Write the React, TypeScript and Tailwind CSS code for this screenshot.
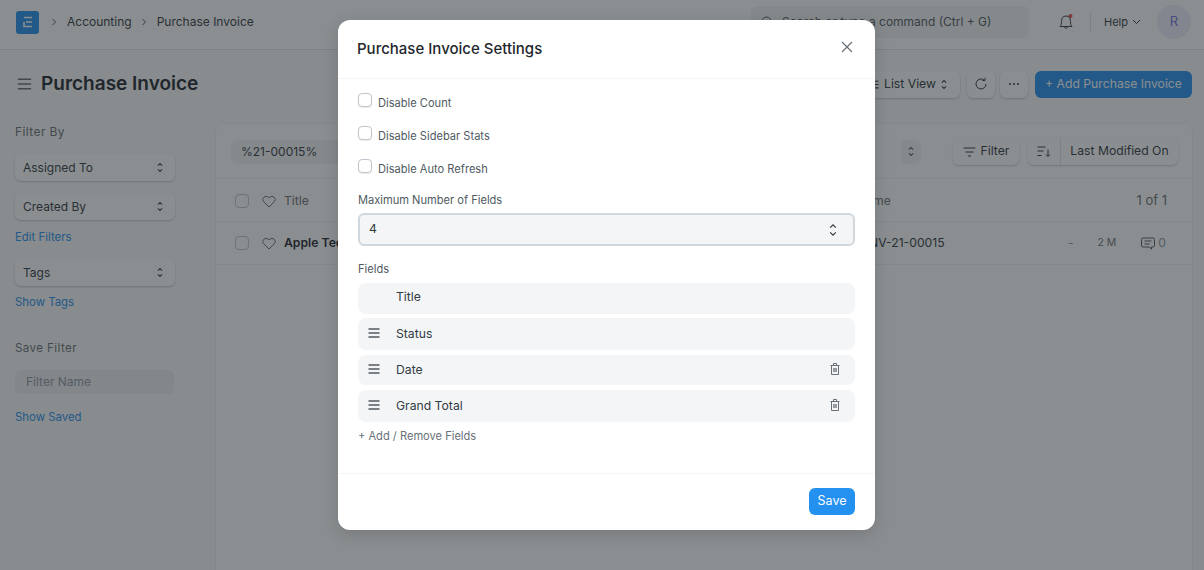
import { ReactNode } from "react";

function UpDown({ className = "" }: { className?: string }) {
    return (
        <svg viewBox="0 0 8 14" fill="none" stroke="currentColor" strokeWidth="1.2" className={`h-[14px] w-[8px] ${className}`}>
            <path d="M1.2 4.600 4 1.800l2.800 2.800M1.200 9.400 4 12.200l2.800-2.800" />
        </svg>
    );
}

function SmallUpDown() {
    return (
        <svg viewBox="0 0 8 14" fill="none" stroke="currentColor" strokeWidth="1.400" className="h-[11px] w-[6px] shrink-0">
            <path d="M1.200 4.600 4 1.800l2.800 2.800M1.200 9.400 4 12.200l2.800-2.800" />
        </svg>
    );
}

function Chevron({ className = "" }: { className?: string }) {
    return (
        <svg width="6" height="8" viewBox="0 0 6 8" fill="none" stroke="currentColor" strokeWidth="1" className={className}>
            <path d="M1.500 1 4.500 4l-3 3" />
        </svg>
    );
}

function Burger({ className = "" }: { className?: string }) {
    return (
        <svg viewBox="0 0 12 10" fill="none" stroke="currentColor" strokeWidth="1.300" className={`shrink-0 ${className}`}>
            <path d="M.5 1h11M.5 5h11M.5 9h11" />
        </svg>
    );
}

function Heart() {
    return (
        <svg width="14" height="13" viewBox="0 0 14 13" fill="none" stroke="#687178" strokeWidth="1" className="shrink-0">
            <path d="M7 12 1.800 6.800a3.100 3.100 0 0 1 0-4.500 3.200 3.200 0 0 1 4.500 0L7 3l.7-.7a3.200 3.200 0 0 1 4.500 0 3.100 3.100 0 0 1 0 4.500L7 12Z" />
        </svg>
    );
}

function Trash() {
    return (
        <svg width="10" height="12" viewBox="0 0 10 12" fill="none" stroke="#687178" strokeWidth="1" className="mb-[2px] shrink-0">
            <path d="M.5 2.500h9M3.500 2.500v-2h3v2M1.500 2.500v9h7v-9M3.800 5v4M6.200 5v4M5 5v4" />
        </svg>
    );
}

function SideSelect({ label, className = "" }: { label: string; className?: string }) {
    return (
        <div className={`flex h-[27px] w-[160px] items-center justify-between rounded-md bg-white pl-2 pr-[12px] text-[12px] text-[#313b44] shadow-[0_1px_2px_rgba(0,0,0,0.2)] ${className}`}>
            {label}
            <SmallUpDown />
        </div>
    );
}

function ToolBtn({ children, className = "" }: { children: ReactNode; className?: string }) {
    return (
        <div className={`flex h-[27px] items-center justify-center rounded-md bg-white text-[12.2px] text-[#313b44] shadow-[0_1px_2px_rgba(0,0,0,0.2)] ${className}`}>
            {children}
        </div>
    );
}

function CheckRow({ label, className = "" }: { label: string; className?: string }) {
    return (
        <div className={`flex h-[20px] items-start ${className}`}>
            <span className="mt-px h-[14px] w-[14px] rounded-[4px] border border-[#c0c6cc] bg-white shadow-[0_1px_1px_rgba(0,0,0,0.08)]" />
            <span className="ml-[6px] pt-[3px] text-[11.1px] leading-[16px] text-[#505a62]">{label}</span>
        </div>
    );
}

function FieldRow({ label, h, drag, del, className = "" }: { label: string; h: string; drag?: boolean; del?: boolean; className?: string }) {
    return (
        <div className={`flex items-center rounded-lg bg-[#f4f5f6] pl-[10px] pr-[15px] text-[12.2px] text-[#313b44] ${h} ${className}`}>
            <span className="flex w-[28px] shrink-0 items-center">{drag && <Burger className="mb-[2px] h-[10px] w-[12px] text-[#505a62]" />}</span>
            <span className="flex-1">{label}</span>
            {del && <Trash />}
        </div>
    );
}

export default function App() {
    return (
        <div className="relative h-[570px] w-[1204px] overflow-hidden bg-[#f9fafa] font-['Inter',sans-serif]">
            {/* navbar */}
            <div className="flex h-[50px] items-center border-b border-[#e2e6e9] bg-white pb-[5px] pl-4 pr-[13px]">
                <div className="flex h-[23px] w-[23px] items-center justify-center rounded-[3px] bg-[#2490ef]">
                    <svg width="10" height="12" viewBox="0 0 10 12" fill="none" stroke="white" strokeWidth="1.600">
                        <path d="M1 1.500h8M3 6h6M1 6v4.500h8" />
                    </svg>
                </div>
                <Chevron className="ml-[12px] text-[#505a62]" />
                <span className="ml-[10px] whitespace-nowrap text-[12px] text-[#313b44]">Accounting</span>
                <Chevron className="ml-[9px] text-[#505a62]" />
                <span className="ml-[10px] whitespace-nowrap text-[12px] text-[#313b44]">Purchase Invoice</span>
                <div className="ml-auto flex h-[32px] w-[278px] items-center rounded-md bg-[#f4f5f6] pl-[10px] text-[12px] text-[#505a62]">
                    <svg width="13" height="13" viewBox="0 0 13 13" fill="none" stroke="#505a62" strokeWidth="1">
                        <circle cx="5.500" cy="5.500" r="4.500" />
                        <path d="m9 9 3 3" />
                    </svg>
                    <span className="ml-2 whitespace-nowrap">Search or type a command (Ctrl + G)</span>
                </div>
                <svg width="16" height="18" viewBox="0 0 16 18" fill="none" stroke="#313b44" strokeWidth="1" className="ml-[29px]">
                    <path d="M2 13.500c1.200-1.200 1.500-2.500 1.500-5C3.500 5 5 3 8 3s4.500 2 4.500 5.500c0 2.500.3 3.800 1.500 5H2ZM6.500 13.500c0 2.500 3 2.500 3 0" />
                    <circle cx="12.500" cy="3" r="2" fill="#e24c4c" stroke="none" />
                </svg>
                <span className="ml-[16px] h-[20px] w-px bg-[#e2e6e9]" />
                <span className="ml-[13px] text-[11px] text-[#313b44]">Help</span>
                <svg width="9" height="6" viewBox="0 0 9 6" fill="none" stroke="#313b44" strokeWidth="1" className="ml-[4px]">
                    <path d="m1 1 3.500 3.500L8 1" />
                </svg>
                <div className="ml-[16px] flex h-[34px] w-[34px] items-center justify-center rounded-full bg-[#eeeefa] text-[13px] text-[#7575d6]">R</div>
            </div>

            {/* page header */}
            <div className="flex h-[69px] items-center pb-[1px] pl-[17px] pr-[12px]">
                <Burger className="h-[12px] w-[15px] text-[#687178]" />
                <h1 className="ml-[9px] mt-[1px] text-[19px] font-semibold text-[#1f272e]">Purchase Invoice</h1>
                <div className="ml-auto flex items-center">
                    <ToolBtn className="w-[98px] gap-[5px] pr-[6px]">
                        <Burger className="h-[9px] w-[10px] text-[#313b44]" />
                        List View
                        <SmallUpDown />
                    </ToolBtn>
                    <ToolBtn className="ml-[7px] w-[28px]">
                        <svg width="14" height="14" viewBox="0 0 14 14" fill="none" stroke="#313b44" strokeWidth="1">
                            <path d="M12 7a5 5 0 1 1-1.700-3.800M11 .8v2.700H8.300" />
                        </svg>
                    </ToolBtn>
                    <ToolBtn className="ml-[5px] w-[28px]">
                        <svg width="10" height="2" viewBox="0 0 10 2" fill="#313b44">
                            <circle cx="1" cy="1" r="1" />
                            <circle cx="5" cy="1" r="1" />
                            <circle cx="9" cy="1" r="1" />
                        </svg>
                    </ToolBtn>
                    <div className="ml-[7px] flex h-[27px] w-[157px] items-center justify-center rounded-md bg-[#2490ef] text-[12.2px] text-white">+ Add Purchase Invoice</div>
                </div>
            </div>

            {/* body */}
            <div className="flex pl-[15px] pr-[12px] pt-[5px]">
                <aside className="w-[201px] shrink-0">
                    <div className="text-[12px] leading-[16px] tracking-[0.4px] text-[#687178]">Filter By</div>
                    <SideSelect label="Assigned To" className="mt-[14px]" />
                    <SideSelect label="Created By" className="mt-[12px]" />
                    <div className="mt-[9px] text-[11.4px] leading-[16px] text-[#2490ef]">Edit Filters</div>
                    <SideSelect label="Tags" className="mt-[14px]" />
                    <div className="mt-[8px] text-[11.4px] leading-[16px] text-[#2490ef]">Show Tags</div>
                    <div className="mt-[30px] text-[11.600px] leading-[16px] tracking-[0.4px] text-[#687178]">Save Filter</div>
                    <div className="mt-[14px] flex h-[24px] w-[159px] items-center rounded-md bg-[#eef0f2] pl-[11px] text-[12px] text-[#8d99a6]">Filter Name</div>
                    <div className="mt-[15px] text-[11.4px] leading-[16px] text-[#2490ef]">Show Saved</div>
                </aside>
                <main className="h-[460px] flex-1 rounded-lg bg-white shadow-[0_0_0_1px_rgba(0,0,0,0.03)]">
                    <div className="flex h-[55px] items-center border-b border-[#eef0f2] pl-[15px] pt-[1px]">
                        <div className="flex h-[24px] w-[140px] items-center rounded-md bg-[#f4f5f6] pl-[10px] text-[12px] text-[#313b44]">%21-00015%</div>
                        <div className="ml-[530px] flex h-[24px] w-[20px] items-center justify-center rounded-r-md bg-[#f4f5f6] text-[#505a62]">
                            <SmallUpDown />
                        </div>
                        <ToolBtn className="ml-[32px] w-[66px] gap-[5px]">
                            <svg width="13" height="10" viewBox="0 0 13 10" fill="none" stroke="#313b44" strokeWidth="1">
                                <path d="M.5 1h12M2.500 5h8M5 9h3" />
                            </svg>
                            Filter
                        </ToolBtn>
                        <ToolBtn className="ml-[9px] w-[150px]">
                            <span className="flex h-full w-[33px] items-center justify-center border-r border-[#e2e6e9]">
                                <svg width="14" height="11" viewBox="0 0 14 11" fill="none" stroke="#313b44" strokeWidth="1">
                                    <path d="M.5 1h8M.5 5h6M.5 9.500h4M11 3.500v6.500M9 8.500l2 2 2-2" />
                                </svg>
                            </span>
                            <span className="flex-1 text-center">Last Modified On</span>
                        </ToolBtn>
                    </div>
                    <div className="flex h-[43px] items-center border-b border-[#eef0f2] pl-[19px] pr-[25px] pt-[2px] text-[12.2px] text-[#687178]">
                        <span className="mr-[13px] h-[14px] w-[14px] shrink-0 rounded-[4px] border border-[#c0c6cc] bg-white" />
                        <Heart />
                        <span className="ml-[8px] w-[573px] shrink-0">Title</span>
                        <span>Name</span>
                        <span className="ml-auto text-[13px]">1 of 1</span>
                    </div>
                    <div className="flex h-[43px] items-center border-b border-[#eef0f2] pl-[19px] pr-[26px] text-[12.2px]">
                        <span className="mr-[13px] h-[14px] w-[14px] shrink-0 rounded-[4px] border border-[#c0c6cc] bg-white" />
                        <Heart />
                        <span className="ml-[8px] w-[574px] shrink-0 font-semibold text-[#1f272e]">Apple Tech</span>
                        <span className="text-[#313b44]">PINV-21-00015</span>
                        <span className="ml-auto text-[12px] text-[#8d99a6]">-</span>
                        <span className="ml-[24px] text-[10.5px] text-[#687178]">2 M</span>
                        <svg width="14" height="13" viewBox="0 0 14 13" fill="none" stroke="#505a62" strokeWidth="1" className="ml-[25px]">
                            <path d="M2 1h10a1.500 1.500 0 0 1 1.500 1.500v6A1.500 1.500 0 0 1 12 10h-1.500v2.200L8.500 10H2A1.500 1.500 0 0 1 .5 8.500v-6A1.500 1.500 0 0 1 2 1ZM3.500 4h7M3.500 7h5" />
                        </svg>
                        <span className="ml-[3px] text-[#8d99a6]">0</span>
                    </div>
                </main>
            </div>

            {/* backdrop */}
            <div className="absolute inset-0 bg-[#20262a]/[0.52]" />

            {/* modal */}
            <div className="absolute left-[338px] top-[20px] flex h-[510px] w-[537px] flex-col rounded-[12px] bg-white shadow-[0_4px_16px_rgba(0,0,0,0.15)]">
                <div className="flex h-[59px] shrink-0 items-center justify-between border-b border-[#f4f5f6] pl-[19px] pr-[21px]">
                    <h2 className="mt-[1px] text-[15px] font-medium text-[#1f272e]">Purchase Invoice Settings</h2>
                    <svg width="14" height="14" viewBox="0 0 14 14" fill="none" stroke="#687178" strokeWidth="1.200" className="mb-[4px]">
                        <path d="m2 2 10 10M12 2 2 12" />
                    </svg>
                </div>
                <div className="flex-1 px-[20px] pt-[13px]">
                    <CheckRow label="Disable Count" />
                    <CheckRow label="Disable Sidebar Stats" className="mt-[13px]" />
                    <CheckRow label="Disable Auto Refresh" className="mt-[13px]" />
                    <div className="mt-[14px] text-[11.1px] leading-[16px] text-[#505a62]">Maximum Number of Fields</div>
                    <div className="mt-[5px] flex h-[33px] items-center justify-between rounded-md border-2 border-[#d1d8dd] bg-[#f4f5f6] pl-[9px] pr-[16px] text-[12.2px] text-[#313b44]">
                        4
                        <UpDown className="text-[#313b44]" />
                    </div>
                    <div className="mt-[15px] text-[11.1px] leading-[16px] text-[#505a62]">Fields</div>
                    <FieldRow label="Title" h="h-[31px]" className="mt-[6px] pb-[2px]" />
                    <FieldRow label="Status" h="h-[32px]" drag className="mt-[4px]" />
                    <FieldRow label="Date" h="h-[30px]" drag del className="mt-[5px]" />
                    <FieldRow label="Grand Total" h="h-[32px]" drag del className="mt-[5px]" />
                    <div className="mt-[6px] text-[11.1px] leading-[16px] text-[#687178]">+ Add / Remove Fields</div>
                </div>
                <div className="flex h-[57px] shrink-0 items-center justify-end border-t border-[#f4f5f6] pb-[2px] pr-[20px]">
                    <div className="flex h-[27px] w-[46px] items-center justify-center rounded-md bg-[#2490ef] text-[12.5px] text-white">Save</div>
                </div>
            </div>
        </div>
    );
}
